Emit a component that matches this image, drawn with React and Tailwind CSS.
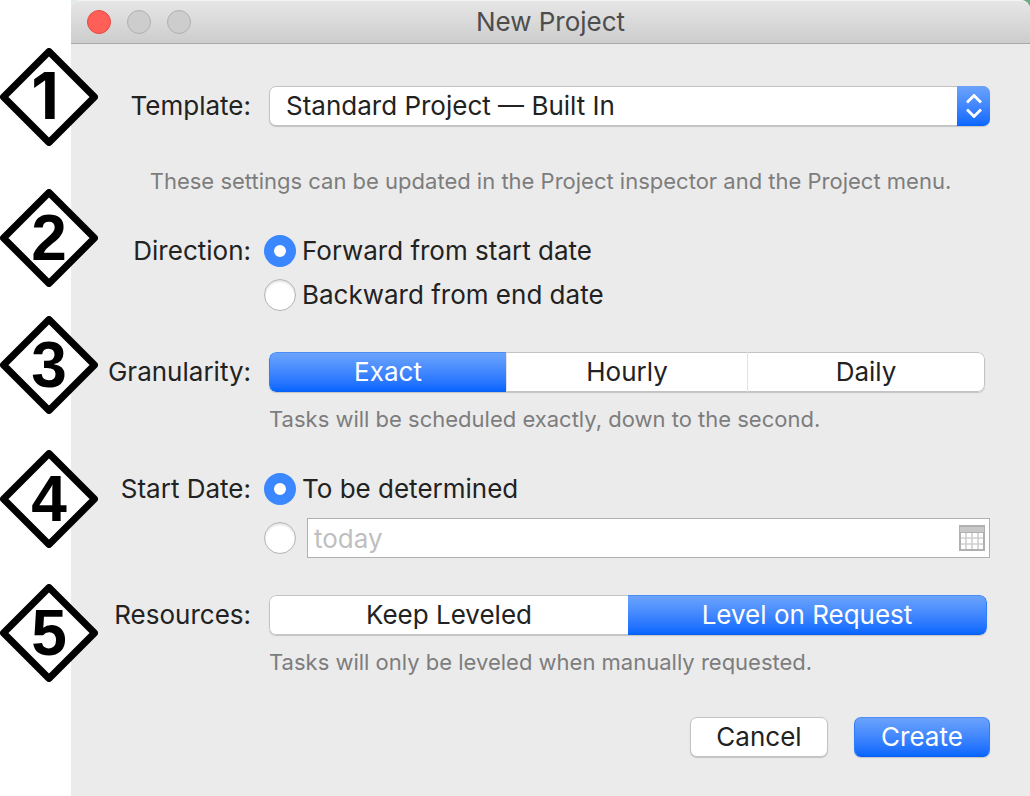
import { useState } from 'react'
import clsx from 'clsx'

const callouts = [
  { number: 1, x: 45, className: 'mt-12', font: 'font-["Inter",sans-serif]' },
  { number: 2, x: 49, className: 'mt-[43px]', font: 'font-["Liberation_Sans",sans-serif]' },
  { number: 3, x: 49, className: 'mt-[29px]', font: 'font-["Liberation_Sans",sans-serif]' },
  { number: 4, x: 49, className: 'mt-9', font: 'font-["Liberation_Sans",sans-serif]' },
  { number: 5, x: 49, className: 'mt-9', font: 'font-["Liberation_Sans",sans-serif]' },
]

function Callout({ number, x, className, font }) {
  return (
    <li className={className}>
      <svg viewBox="0 0 98 98" className="block size-[98px]">
        <path d="M49 3.5 94.5 49 49 94.5 3.5 49Z" fill="#fff" stroke="#000" strokeWidth="7" strokeLinejoin="round" />
        <text x={x} y="71" textAnchor="middle" className={clsx('text-[64px] font-bold', font)}>
          {number}
        </text>
      </svg>
    </li>
  )
}

function Row({ id, label, htmlFor, className, children }) {
  return (
    <div className={clsx('grid grid-cols-[180px_minmax(0,1fr)] gap-x-[18px]', className)}>
      <label id={id} htmlFor={htmlFor} className="flex h-10 items-center justify-end whitespace-nowrap">
        {label}
      </label>
      {children}
    </div>
  )
}

function Radio(props) {
  return (
    <input
      type="radio"
      className="size-8 shrink-0 appearance-none rounded-full border border-[#b4b4b4] bg-white shadow-[inset_0_2px_2px_#e4e4e4] checked:border-[10px] checked:border-[#3b87ff] checked:shadow-none"
      {...props}
    />
  )
}

function Segmented({ labelledBy, options, value, onChange, className }) {
  return (
    <div
      role="group"
      aria-labelledby={labelledBy}
      className={clsx(
        'grid h-10 overflow-hidden rounded-[7px] bg-white shadow-[0_1px_1px_#c4c4c4]',
        className
      )}
    >
      {options.map((option) => (
        <button
          key={option}
          type="button"
          aria-pressed={option === value}
          onClick={() => onChange(option)}
          className={clsx(
            'border-y first:rounded-l-[7px] first:border-l last:rounded-r-[7px] last:border-r',
            option === value
              ? 'border-t-[#4c8df5] border-r-[#2f7df8] border-b-[#0a60f0] border-l-[#2f7df8] bg-linear-to-b from-[#6ba3fb] to-[#0566ff] text-white'
              : 'border-[#c3c3c3] not-first:border-l not-first:border-l-[#e2e2e2]'
          )}
        >
          {option}
        </button>
      ))}
    </div>
  )
}

function CalendarIcon() {
  return (
    <svg viewBox="0 0 26 26" className="size-[26px] shrink-0" aria-hidden="true">
      <path d="M0 0h26v26H0z" fill="#b0b0b0" />
      <path d="M1 2h24v5H1z" fill="#c8c8c8" />
      <path d="M2 8h22v16H2z" fill="#fff" />
      <path d="M7 8v16M13 8v16M19 8v16M2 13h22M2 19h22" stroke="#cfcfcf" strokeWidth="1.6" />
    </svg>
  )
}

function App() {
  const [direction, setDirection] = useState('forward')
  const [granularity, setGranularity] = useState('Exact')
  const [start, setStart] = useState('tbd')
  const [leveling, setLeveling] = useState('Level on Request')

  return (
    <div className='flex min-h-screen bg-white font-["Inter",sans-serif] text-[26px] leading-8 text-[#222]'>
      <ol className="z-10 w-[98px] shrink-0">
        {callouts.map((callout) => (
          <Callout key={callout.number} {...callout} />
        ))}
      </ol>

      <div className="-ml-[27px] flex min-w-0 flex-1 bg-linear-to-r from-[#dfeee6] to-[#6cab86]">
        <main className="flex min-w-0 flex-1 flex-col rounded-t-[9px] bg-[#ebebeb]">
          <header className="grid h-11 grid-cols-[1fr_auto_1fr] items-center rounded-t-[9px] border-t border-b border-t-[#f4f4f4] border-b-[#a8a8a8] bg-linear-to-b from-[#e6e6e6] to-[#cdcdcd] px-4">
            <div className="flex gap-4">
              <button type="button" aria-label="Close" className="size-6 rounded-full border border-[#e24b44] bg-[#ff5f57]" />
              <button type="button" aria-label="Minimize" disabled className="size-6 rounded-full border border-[#b0b0b0] bg-[#cdcdcd]" />
              <button type="button" aria-label="Zoom" disabled className="size-6 rounded-full border border-[#b0b0b0] bg-[#cdcdcd]" />
            </div>
            <h1 className="text-[#4d4d4d]">New Project</h1>
          </header>

          <form className="flex flex-col pt-[42px] pb-[38px]" onSubmit={(e) => e.preventDefault()}>
            <Row label="Template:" htmlFor="template" className="pr-10">
              <div className="grid">
                <select
                  id="template"
                  className="col-start-1 row-start-1 h-10 appearance-none rounded-[7px] border border-[#c3c3c3] bg-white pl-4 shadow-[0_1px_1px_#c4c4c4]"
                >
                  <option>Standard Project — Built In</option>
                </select>
                <span className="pointer-events-none col-start-1 row-start-1 flex h-10 w-[33px] items-center justify-center justify-self-end rounded-r-[7px] bg-linear-to-b from-[#6ba3fb] to-[#0566ff]">
                  <svg viewBox="0 0 16 24" className="h-6 w-4" fill="none" stroke="#fff" strokeWidth="2.8" aria-hidden="true">
                    <path d="M1 8.5 8 1.5l7 7M1 15.5l7 7 7-7" />
                  </svg>
                </span>
              </div>
            </Row>

            <p className="mt-[42px] text-center text-[22px] leading-[26px] text-[#7d7d7d]">
              These settings can be updated in the Project inspector and the Project menu.
            </p>

            <Row id="direction" label="Direction:" className="mt-[37px] pr-10">
              <div role="radiogroup" aria-labelledby="direction" className="-ml-[5px] flex flex-col gap-3 pt-1">
                <label className="flex items-center gap-[6px]">
                  <Radio name="direction" checked={direction === 'forward'} onChange={() => setDirection('forward')} />
                  Forward from start date
                </label>
                <label className="flex items-center gap-[6px]">
                  <Radio name="direction" checked={direction === 'backward'} onChange={() => setDirection('backward')} />
                  Backward from end date
                </label>
              </div>
            </Row>

            <Row id="granularity" label="Granularity:" className="mt-[41px] pr-[45px]">
              <Segmented
                labelledBy="granularity"
                options={['Exact', 'Hourly', 'Daily']}
                value={granularity}
                onChange={setGranularity}
                className="grid-cols-[237fr_241fr_238fr]"
              />
              <p className="col-start-2 mt-[14px] text-[22px] leading-[26px] text-[#7d7d7d]">
                Tasks will be scheduled exactly, down to the second.
              </p>
            </Row>

            <Row id="start-date" label="Start Date:" className="mt-[37px] pr-10">
              <div role="radiogroup" aria-labelledby="start-date" className="-ml-[5px] flex flex-col gap-[13px] pt-1">
                <label className="flex items-center gap-[6px]">
                  <Radio name="start" checked={start === 'tbd'} onChange={() => setStart('tbd')} />
                  To be determined
                </label>
                <div className="flex items-center gap-[11px]">
                  <Radio name="start" aria-label="On date" checked={start === 'date'} onChange={() => setStart('date')} />
                  <div className="flex h-10 min-w-0 flex-1 items-center border border-[#b0b0b0] bg-white pr-1 pl-[6px]">
                    <input
                      type="text"
                      aria-label="Start date"
                      placeholder="today"
                      className="min-w-0 flex-1 pt-0.5 outline-none placeholder:text-[#bfbfbf]"
                    />
                    <CalendarIcon />
                  </div>
                </div>
              </div>
            </Row>

            <Row id="resources" label="Resources:" className="mt-[37px] pr-[43px]">
              <Segmented
                labelledBy="resources"
                options={['Keep Leveled', 'Level on Request']}
                value={leveling}
                onChange={setLeveling}
                className="grid-cols-2"
              />
              <p className="col-start-2 mt-[14px] text-[22px] leading-[26px] text-[#7d7d7d]">
                Tasks will only be leveled when manually requested.
              </p>
            </Row>

            <div className="mt-[42px] flex justify-end gap-[26px] pr-10">
              <button
                type="button"
                className="h-10 w-[138px] rounded-[7px] border border-[#c3c3c3] bg-white shadow-[0_1px_1px_#c4c4c4]"
              >
                Cancel
              </button>
              <button
                type="submit"
                className="h-10 w-[136px] rounded-[7px] border border-t-[#4c8df5] border-r-[#2f7df8] border-b-[#0a60f0] border-l-[#2f7df8] bg-linear-to-b from-[#6ba3fb] to-[#0566ff] text-white shadow-[0_1px_1px_#c4c4c4]"
              >
                Create
              </button>
            </div>
          </form>
        </main>
      </div>
    </div>
  )
}

export default App
